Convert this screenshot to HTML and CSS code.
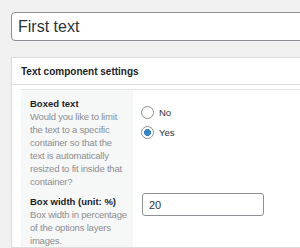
FILE: index.html
```html
<!DOCTYPE html>
<html lang="en">
  <head>
    <meta charset="UTF-8" />
    <title>Text component settings</title>
    <link rel="stylesheet" href="styles.css">
  </head>
  <body>
    <input type="text" class="title-field" value="First text" />

    <div class="postbox">
      <h2 class="postbox-title">Text component settings</h2>
      <div class="postbox-inside">
        <div class="settings">
          <div class="setting-label">
            <strong>Boxed text</strong>
            <p>Would you like to limit<br>the text to a specific<br>container so that the<br>text is automatically<br>resized to fit inside that<br>container?</p>
          </div>
          <div class="setting-field">
            <div class="radio-group">
              <label class="radio"><span class="radio-dot"></span>No</label>
              <label class="radio"><span class="radio-dot checked"></span>Yes</label>
            </div>
          </div>

          <div class="setting-label">
            <strong>Box width (unit: %)</strong>
            <p>Box width in percentage<br>of the options layers<br>images.</p>
          </div>
          <div class="setting-field">
            <input type="text" class="small-field" value="20" />
          </div>
        </div>
      </div>
    </div>
  </body>
</html>
```

FILE: styles.css
```css
html {
  font-family: "Liberation Sans", Arial, sans-serif;
}

body {
  margin: 0;
  padding: 12px 0 0 11px;
  width: 400px;
  height: 236px;
  background-color: #f0f0f1;
  color: #1d2327;
  overflow: hidden;
}

.title-field {
  display: block;
  box-sizing: border-box;
  width: 360px;
  height: 29px;
  margin: 0;
  padding: 0 6px;
  border: 1px solid #8c8f94;
  border-radius: 4px;
  background-color: #fff;
  color: #2c3338;
  font-family: inherit;
  font-size: 16px;
}

.postbox {
  margin-top: 16px;
  width: 360px;
  border: 1px solid #dcdcde;
  background-color: #fff;
}

.postbox-title {
  margin: 0;
  height: 26px;
  line-height: 27px;
  padding-left: 9px;
  font-size: 10px;
  font-weight: bold;
  border-bottom: 1px solid #dcdcde;
}

.postbox-inside {
  padding: 4px 0 0 9px;
}

.settings {
  display: grid;
  grid-template-columns: 112px 1fr;
  border-top: 1px solid #e4e4e6;
}

.setting-label {
  background-color: #f6f7f7;
  padding: 8px 0 0 9px;
  font-size: 9.5px;
  line-height: 13px;
}

.setting-label strong {
  display: block;
  line-height: 12px;
}

.setting-label p {
  margin: 0;
  color: #8c8f94;
  white-space: nowrap;
  letter-spacing: -0.2px;
}

.setting-field {
  padding: 5px 0 0 8px;
}

.radio-group {
  padding-top: 7px;
}

.radio {
  display: flex;
  align-items: center;
  gap: 5px;
  height: 20px;
  font-size: 9.5px;
  color: #2c3338;
}

.radio-dot {
  box-sizing: border-box;
  width: 13px;
  height: 13px;
  border: 1px solid #8c8f94;
  border-radius: 50%;
  background-color: #fff;
}

.radio-dot.checked {
  background: radial-gradient(circle, #3582c4 0 3.2px, #fff 3.8px);
}

.small-field {
  box-sizing: border-box;
  width: 122px;
  height: 23px;
  margin: 0 0 0 1px;
  padding: 0 6px;
  border: 1px solid #8c8f94;
  border-radius: 3px;
  font-family: inherit;
  font-size: 11px;
  color: #2c3338;
}
```
